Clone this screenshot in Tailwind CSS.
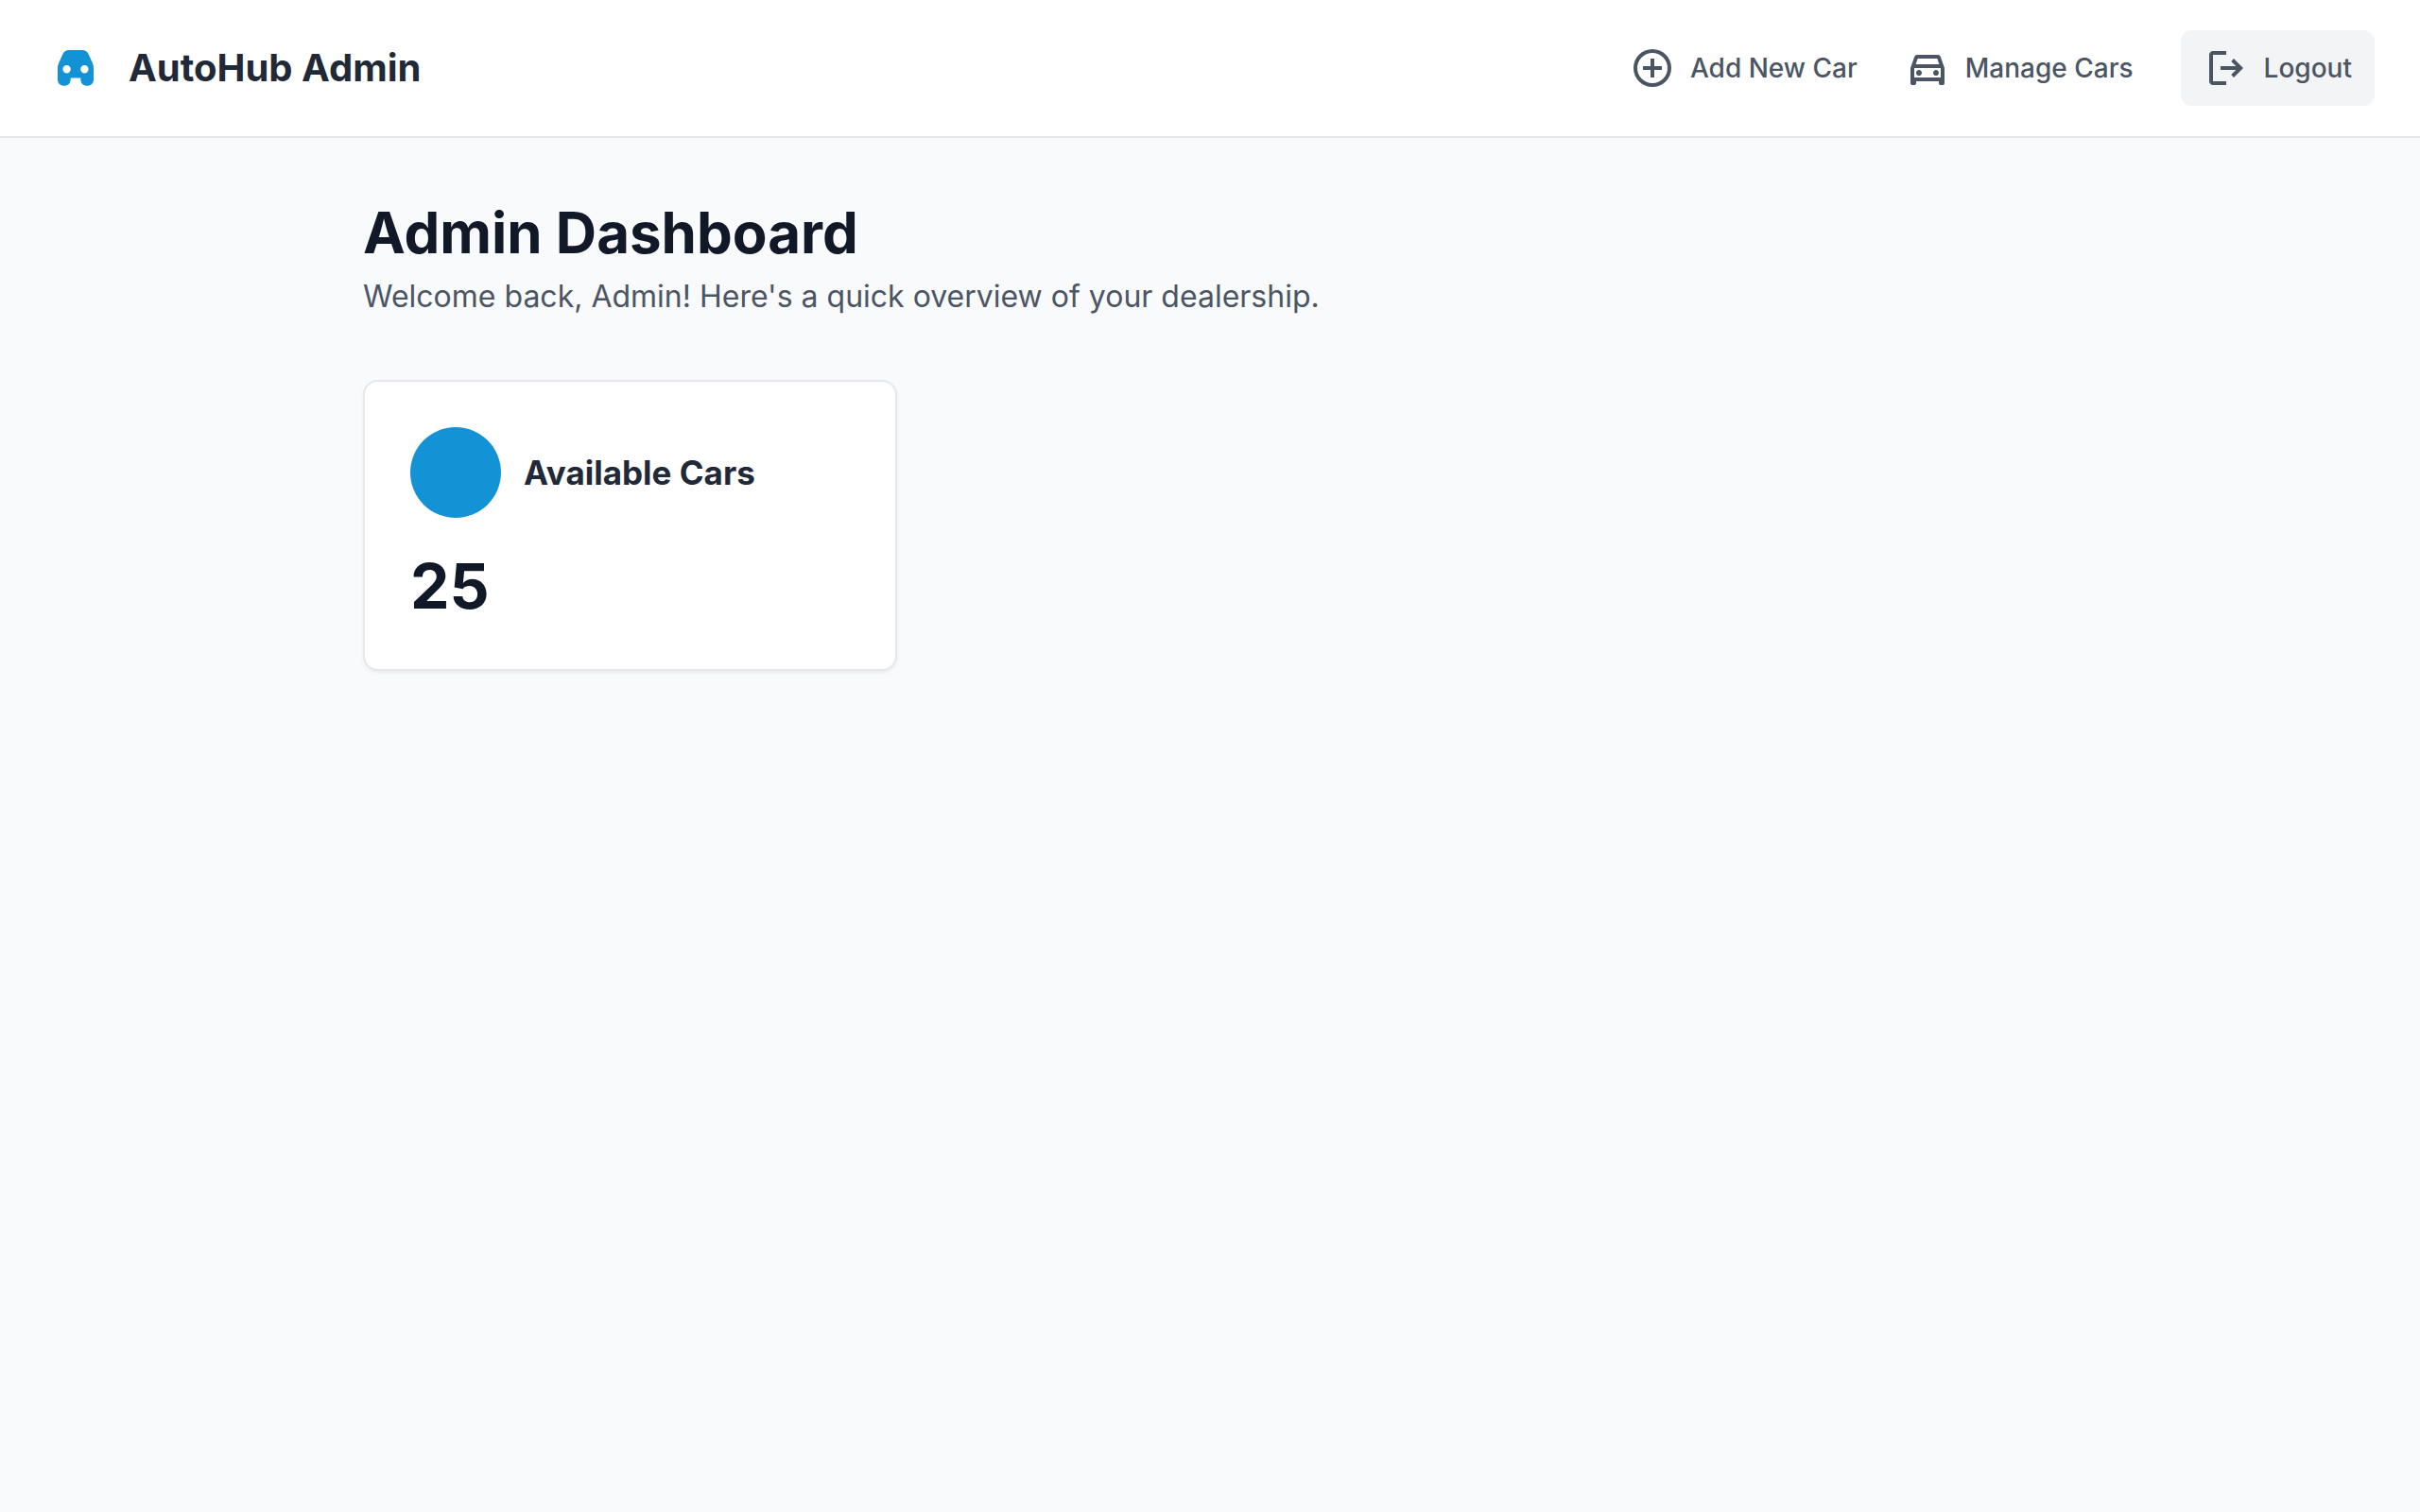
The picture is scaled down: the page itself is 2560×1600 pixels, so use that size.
<!DOCTYPE html>
<html lang="en">
<head>
<meta charset="utf-8">
<meta name="viewport" content="width=device-width, initial-scale=1">
<title>AutoHub Admin</title>
<script src="https://cdn.jsdelivr.net/npm/@tailwindcss/browser@4"></script>
</head>
<body class="min-h-screen bg-[#f9fafc] font-['Inter',sans-serif] text-[#111827]">
<header class="flex items-center justify-between border-b-2 border-[#e5e7eb] bg-white px-12 py-8">
  <div class="flex items-center gap-6">
    <svg class="size-16 text-[#1392d6]" viewBox="0 0 64 64" fill="currentColor" aria-hidden="true">
      <path fill-rule="evenodd" d="M25 13H39Q43.5 13 45.5 17L50 27Q51 29.500 51 32V44.500A6.200 6.200 0 0 1 44.800 50.700H43.500A6.200 6.200 0 0 1 37.300 44.500V42.500H26.700V44.500A6.200 6.200 0 0 1 20.500 50.700H19.200A6.200 6.200 0 0 1 13 44.500V32Q13 29.500 14 27L18.500 17Q20.500 13 25 13ZM22.600 29.100a4.200 4.200 0 1 0 0 8.400a4.200 4.200 0 0 0 0-8.400ZM41.400 29.100a4.200 4.200 0 1 0 0 8.400a4.200 4.200 0 0 0 0-8.400Z"/>
    </svg>
    <h2 class="text-[40px] leading-[50px] font-bold text-[#1f2937]">AutoHub Admin</h2>
  </div>
  <nav class="flex items-center gap-[50px] text-[28px] leading-[42px] font-medium text-[#4b5563]">
    <a href="#" class="flex items-center gap-4">
      <svg class="size-12" viewBox="0 0 24 24" fill="currentColor" aria-hidden="true"><path d="M11 17h2v-4h4v-2h-4V7h-2v4H7v2h4v4Zm1 5A10 10 0 1 1 12 2a10 10 0 0 1 0 20Zm0-2a8 8 0 1 0 0-16a8 8 0 0 0 0 16Z"/></svg>
      Add New Car
    </a>
    <a href="#" class="flex items-center gap-4">
      <svg class="size-12" viewBox="0 0 24 24" fill="currentColor" aria-hidden="true"><path fill-rule="evenodd" d="M6 19v1q0 .425-.287.713T5 21H4q-.425 0-.712-.287T3 20v-8l2.100-6q.150-.450.537-.725T6.500 5h11q.475 0 .863.275T18.900 6l2.100 6v8q0 .425-.287.713T20 21h-1q-.425 0-.712-.287T18 20v-1H6Zm-.200-9h12.400l-1.050-3H6.850L5.800 10ZM5 12v5h14v-5H5Zm2.500 4q.625 0 1.063-.437T9 14.500t-.437-1.062T7.500 13t-1.062.438T6 14.500t.438 1.063T7.500 16Zm9 0q.625 0 1.063-.437T18 14.500t-.437-1.062T16.500 13t-1.062.438T15 14.500t.438 1.063T16.500 16Z"/></svg>
      Manage Cars
    </a>
    <button type="button" class="flex h-20 items-center gap-4 rounded-xl bg-[#f3f4f6] px-6">
      <svg class="size-12" viewBox="0 0 24 24" fill="currentColor" aria-hidden="true"><path d="M5 21q-.825 0-1.412-.587T3 19V5q0-.825.588-1.412T5 3h7v2H5v14h7v2H5Zm11-4l-1.375-1.450l2.550-2.550H9v-2h8.175l-2.550-2.550L16 7l5 5l-5 5Z"/></svg>
      Logout
    </button>
  </nav>
</header>
<main class="mx-auto max-w-[1792px] pt-16 pb-16">
  <div class="mb-16">
    <h1 class="text-[60px] leading-[72px] font-bold">Admin Dashboard</h1>
    <p class="mt-2 text-[32px] leading-[48px] text-[#4b5563]">Welcome back, Admin! Here's a quick overview of your dealership.</p>
  </div>
  <div class="grid grid-cols-3 gap-12">
    <section class="rounded-2xl border-2 border-[#e5e7eb] bg-white p-12 shadow-[0_2px_4px_rgba(0,0,0,0.06)]">
      <div class="flex items-center gap-6">
        <div class="size-24 shrink-0 rounded-full bg-[#1392d6]"></div>
        <h2 class="text-[35px] leading-[44px] font-bold text-[#1f2937]">Available Cars</h2>
      </div>
      <p class="mt-8 text-[66px] leading-[80px] font-bold">25</p>
    </section>
  </div>
</main>
</body>
</html>
